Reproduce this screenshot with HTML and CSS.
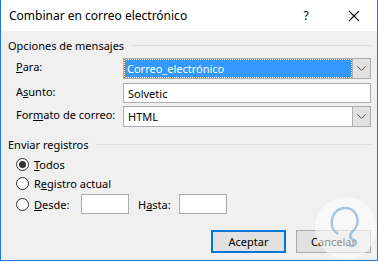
FILE: index.html
```html
<!DOCTYPE html>
<html lang="es">
<head>
  <meta charset="UTF-8">
  <title>Combinar en correo electrónico</title>
  <link rel="stylesheet" href="styles.css">
</head>
<body>

  <div class="dialog">
    <div class="titlebar">
      <span class="title">Combinar en correo electrónico</span>
      <span class="help">?</span>
      <span class="close">
        <svg width="12" height="12" viewBox="0 0 12 12"><path d="M1 1L11 11M11 1L1 11" stroke="#000" stroke-width="1.1" fill="none"/></svg>
      </span>
    </div>

    <div class="content">
      <div class="group-title">Opciones de mensajes</div>

      <div class="form-row">
        <label><u>P</u>ara:</label>
        <div class="combo focused">
          <span class="combo-value"><span class="selected">Correo_electrónico</span></span>
          <span class="combo-btn"><svg width="9" height="5" viewBox="0 0 9 5"><path d="M0.5 0.5L4.5 4.5L8.5 0.5" stroke="#555" fill="none"/></svg></span>
        </div>
      </div>

      <div class="form-row row-subject">
        <label>A<u>s</u>unto:</label>
        <div class="textbox wide">Solvetic</div>
      </div>

      <div class="form-row">
        <label>For<u>m</u>ato de correo:</label>
        <div class="combo">
          <span class="combo-value">HTML</span>
          <span class="combo-btn"><svg width="9" height="5" viewBox="0 0 9 5"><path d="M0.5 0.5L4.5 4.5L8.5 0.5" stroke="#555" fill="none"/></svg></span>
        </div>
      </div>

      <div class="group-title second">Enviar registros</div>

      <div class="radio-row">
        <span class="radio checked"></span>
        <span><u>T</u>odos</span>
      </div>
      <div class="radio-row">
        <span class="radio"></span>
        <span>R<u>e</u>gistro actual</span>
      </div>
      <div class="radio-row range">
        <span class="radio"></span>
        <span class="range-label"><u>D</u>esde:</span>
        <div class="textbox small"></div>
        <span class="range-label to">H<u>a</u>sta:</span>
        <div class="textbox small"></div>
      </div>

      <div class="buttons">
        <button class="default">Aceptar</button>
        <button>Cancelar</button>
      </div>
    </div>

    <svg class="watermark" width="64" height="64" viewBox="0 0 64 64">
      <circle cx="32" cy="32" r="31" fill="#ffffff" opacity="0.55"/>
      <path d="M24 38C14 32 16 14 30 12C44 11 48 28 38 36C35 39 36 43 40 44C44 46 42 50 36 50" stroke="#8fb6d8" stroke-width="2.5" fill="none" opacity="0.8"/>
    </svg>
  </div>

</body>
</html>
```

FILE: styles.css
```css
body {
  margin: 0;
  padding: 0;
  background-color: #ffffff;
  font-family: "Noto Sans", Arial, sans-serif;
  font-size: 11px;
  color: #000;
}
.dialog {
  position: relative;
  width: 376px;
  height: 260px;
  border: 1px solid #1c7ad6;
  border-top: none;
  background-color: #f0f0f0;
  overflow: hidden;
}
.titlebar {
  display: flex;
  align-items: center;
  height: 31px;
  background-color: #ffffff;
  font-size: 12px;
}
.title {
  flex: 1;
  padding-left: 8px;
  padding-bottom: 1px;
}
.help {
  width: 12px;
  margin-right: 36px;
  text-align: center;
  font-size: 12px;
}
.close {
  display: flex;
  margin-right: 17px;
}
.content {
  padding: 6px 6px 0 7px;
}
.group-title {
  display: flex;
  align-items: center;
  height: 16px;
  margin-bottom: 5px;
}
.group-title::after {
  content: "";
  flex: 1;
  height: 1px;
  margin-left: 7px;
  background-color: #dcdcdc;
}
.group-title.second {
  margin-top: 9px;
  margin-bottom: 4px;
}
.form-row {
  display: flex;
  align-items: flex-start;
  margin-left: 8px;
  margin-bottom: 4px;
}
.form-row.row-subject {
  margin-bottom: 3px;
}
.form-row label {
  width: 107px;
  padding-top: 1px;
}
.combo {
  display: flex;
  flex: 1;
  height: 19px;
  border: 1px solid #adadad;
  background-color: #ffffff;
}
.combo-value {
  flex: 1;
  display: flex;
  align-items: center;
  padding: 2px 1px 2px 2px;
}
.combo.focused .combo-value {
  padding: 1px 1px 1px 1px;
}
.selected {
  display: flex;
  align-items: center;
  width: 100%;
  height: 100%;
  padding-left: 2px;
  background-color: #3399ff;
  color: #ffffff;
  outline: 1px dotted #e07a1a;
}
.combo-value:not(:has(.selected)) {
  padding-left: 4px;
}
.combo-btn {
  display: flex;
  align-items: center;
  justify-content: center;
  width: 17px;
  border-left: 1px solid #adadad;
  background-color: #e1e1e1;
}
.textbox {
  height: 18px;
  border: 1px solid #adadad;
  background-color: #ffffff;
  display: flex;
  align-items: center;
  padding-left: 4px;
}
.textbox.wide {
  flex: 1;
}
.textbox.small {
  width: 42px;
}
.radio-row {
  display: flex;
  align-items: center;
  height: 16px;
  margin-left: 8px;
  margin-bottom: 3px;
}
.radio-row.range {
  height: 20px;
  margin-top: 1px;
}
.radio {
  position: relative;
  box-sizing: border-box;
  width: 13px;
  height: 13px;
  margin-right: 5px;
  border: 1px solid #333;
  border-radius: 50%;
  background-color: #ffffff;
}
.radio.checked::after {
  content: "";
  position: absolute;
  top: 2px;
  left: 2px;
  width: 7px;
  height: 7px;
  border-radius: 50%;
  background-color: #333;
}
.range-label {
  width: 47px;
}
.range-label.to {
  width: 41px;
  margin-left: 9px;
}
.buttons {
  display: flex;
  justify-content: flex-end;
  gap: 10px;
  margin-top: 16px;
}
button {
  width: 75px;
  height: 23px;
  font-family: "Noto Sans", Arial, sans-serif;
  font-size: 11px;
  color: #000;
  background-color: #e1e1e1;
  border: 1px solid #adadad;
  padding: 0;
}
button.default {
  border: 2px solid #0078d7;
}
.watermark {
  position: absolute;
  left: 313px;
  top: 196px;
}
```
